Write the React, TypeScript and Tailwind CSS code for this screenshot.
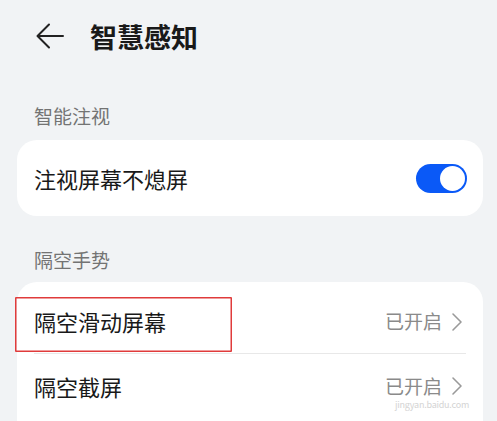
import React from 'react';

const font = { fontFamily: '"Noto Sans CJK SC", "Noto Sans", sans-serif' };

const Toggle = () => (
  <div className="w-[51px] h-[29px] rounded-full bg-[#0a59f7] flex items-center justify-end pr-[2px]">
    <div className="w-[25px] h-[25px] rounded-full bg-white" />
  </div>
);

const Chevron = () => (
  <svg width="12" height="20" viewBox="0 0 12 20" fill="none">
    <path d="M2 2 L10 10 L2 18" stroke="#9a9a9a" strokeWidth="1.6" strokeLinecap="round" strokeLinejoin="round" />
  </svg>
);

export default function App() {
  return (
    <div className="w-[497px] h-[421px] overflow-hidden bg-[#f1f3f5] text-[#191919]" style={font}>
      {/* Header */}
      <div className="h-[72px] flex items-center pl-[36px]">
        <svg width="28" height="26" viewBox="0 0 28 26" fill="none">
          <path d="M27 13 H2 M13 1.5 L1.5 13 L13 24.5" stroke="#222" strokeWidth="2" strokeLinecap="round" strokeLinejoin="round" />
        </svg>
        <div className="ml-[26px] text-[27px] font-bold leading-none">智慧感知</div>
      </div>

      <div className="mt-[30px] mb-[10px] pl-[34px] h-[28px] flex items-center text-[19px] text-[#737373]">智能注视</div>

      <div className="ml-[17px] mr-[14px] h-[76px] rounded-[20px] bg-white flex items-center justify-between pl-[17px] pr-[16px]">
        <span className="text-[22px]">注视屏幕不熄屏</span>
        <Toggle />
      </div>

      <div className="mt-[30px] mb-[8px] pl-[34px] h-[28px] flex items-center text-[19px] text-[#737373]">隔空手势</div>

      <div className="relative ml-[17px] mr-[14px] h-[180px] rounded-[20px] bg-white">
        <div className="mx-[17px] h-[72px] pt-[8px] flex items-center justify-between pr-[3px] border-b border-[#e8e8e8]">
          <span className="text-[22px]">隔空滑动屏幕</span>
          <div className="flex items-center gap-[9px]">
            <span className="text-[19px] text-[#8a8a8a]">已开启</span>
            <Chevron />
          </div>
        </div>
        <div className="mx-[17px] h-[64px] flex items-center justify-between pr-[3px]">
          <span className="text-[22px]">隔空截屏</span>
          <div className="flex items-center gap-[9px]">
            <span className="text-[19px] text-[#8a8a8a]">已开启</span>
            <Chevron />
          </div>
        </div>

        {/* highlight box */}
        <div className="absolute left-[-2px] top-[15px] w-[217px] h-[55px] rounded-[1px] ring-[1.5px] ring-inset ring-[#e03b3b]" />

        {/* watermark */}
        <div className="absolute right-[14px] top-[118px] text-[9px] leading-none text-[#d4d4d4] tracking-tight">
          jingyan.baidu.com
        </div>
      </div>
    </div>
  );
}
